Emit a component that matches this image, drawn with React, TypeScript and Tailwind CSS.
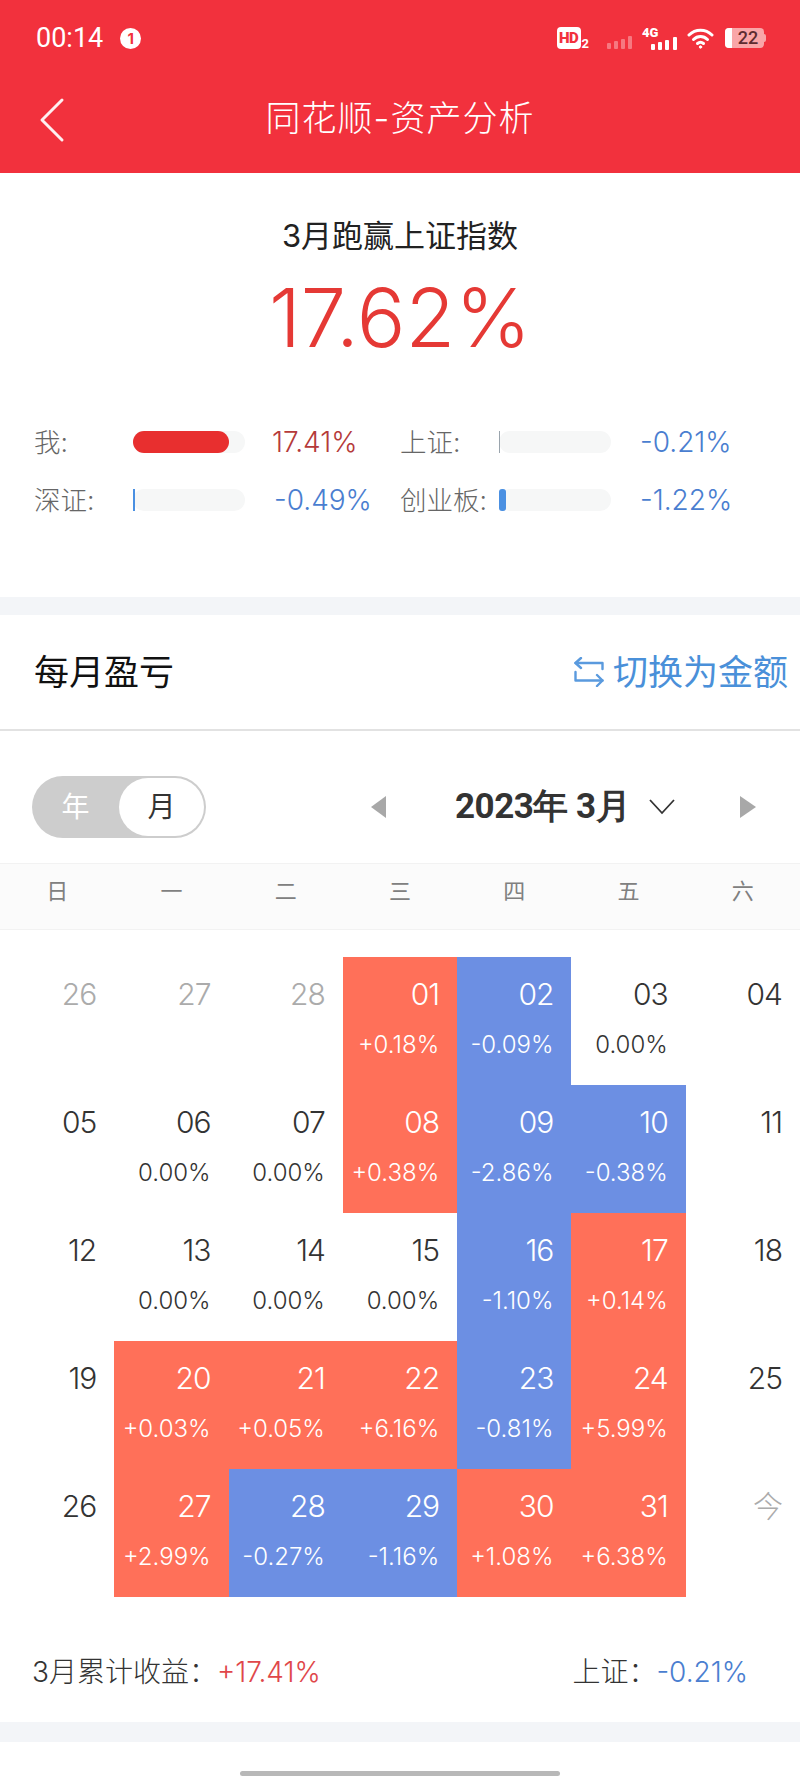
import React from "react";

const FONT = { fontFamily: '"Inter","Noto Sans CJK SC",sans-serif' };

type Cell = { d: string; p?: string; tone?: "r" | "b"; muted?: boolean };

const cells: Cell[] = [
  { d: "26", muted: true }, { d: "27", muted: true }, { d: "28", muted: true },
  { d: "01", p: "+0.18%", tone: "r" }, { d: "02", p: "-0.09%", tone: "b" }, { d: "03", p: "0.00%" }, { d: "04" },
  { d: "05" }, { d: "06", p: "0.00%" }, { d: "07", p: "0.00%" },
  { d: "08", p: "+0.38%", tone: "r" }, { d: "09", p: "-2.86%", tone: "b" }, { d: "10", p: "-0.38%", tone: "b" }, { d: "11" },
  { d: "12" }, { d: "13", p: "0.00%" }, { d: "14", p: "0.00%" }, { d: "15", p: "0.00%" },
  { d: "16", p: "-1.10%", tone: "b" }, { d: "17", p: "+0.14%", tone: "r" }, { d: "18" },
  { d: "19" }, { d: "20", p: "+0.03%", tone: "r" }, { d: "21", p: "+0.05%", tone: "r" }, { d: "22", p: "+6.16%", tone: "r" },
  { d: "23", p: "-0.81%", tone: "b" }, { d: "24", p: "+5.99%", tone: "r" }, { d: "25" },
  { d: "26" }, { d: "27", p: "+2.99%", tone: "r" }, { d: "28", p: "-0.27%", tone: "b" }, { d: "29", p: "-1.16%", tone: "b" },
  { d: "30", p: "+1.08%", tone: "r" }, { d: "31", p: "+6.38%", tone: "r" }, { d: "今", muted: true },
];

function DayCell({ c }: { c: Cell }) {
  const bg = c.tone === "r" ? "bg-[#ff7059]" : c.tone === "b" ? "bg-[#6c8fe3]" : "";
  const num = c.tone ? "text-white" : c.muted ? "text-[#ababab]" : "text-[#333333]";
  const pc = c.tone ? "text-white" : "text-[#333333]";
  return (
    <div className={`flex flex-col items-end pr-[18px] pt-[19px] ${bg}`}>
      <div className={`text-[30px] leading-[36px] font-light tracking-[-1px] ${num}`}>{c.d}</div>
      <div className={`mt-[18px] text-[24px] leading-[30px] font-light ${pc}`}>{c.p}</div>
    </div>
  );
}

function Stat({ label, value, fill, barClass, valueClass, valueMl }: { label: string; value: string; fill: string; barClass: string; valueClass: string; valueMl: string }) {
  return (
    <div className="flex items-center">
      <div className="w-[99px] text-[26.5px] leading-[30px] text-[#666666] font-light">{label}</div>
      <div className="h-[22px] w-[112px] rounded-[11px] bg-[#f6f7f7]">
        <div className={`h-full ${fill} ${barClass}`} />
      </div>
      <div className={`${valueMl} text-[28px] leading-[30px] font-light ${valueClass}`}>{value}</div>
    </div>
  );
}

export default function App() {
  return (
    <div className="flex h-[1778px] w-[800px] flex-col overflow-hidden bg-white" style={FONT}>
      {/* Header */}
      <header className="h-[173px] shrink-0 bg-[#f2313d] text-white">
        <div className="flex h-[76px] items-center pl-[36px] pr-[34px]">
          <span className="font-[Roboto] text-[27px] leading-[32px]">00:14</span>
          <span className="ml-[17px] flex h-[21px] w-[21px] items-center justify-center rounded-full bg-white text-[15px] font-bold leading-none text-[#f2313d]">1</span>
          <div className="ml-auto flex items-center">
            <div className="flex h-[22px] w-[24px] items-center justify-center rounded-[4px] bg-white font-[Roboto] text-[15px] font-black leading-none tracking-[-0.5px] text-[#f2313d]">HD</div>
            <span className="mt-[11px] ml-[1px] font-[Roboto] text-[13px] font-bold leading-none">2</span>
            <svg className="ml-[18px] mt-[8px]" width="27" height="13" viewBox="0 0 27 13">
              <g fill="#ffffff" fillOpacity="0.35">
                <rect x="0" y="7" width="4" height="6" rx="1" />
                <rect x="7" y="5" width="4" height="8" rx="1" />
                <rect x="14" y="3" width="4" height="10" rx="1" />
                <rect x="21" y="0" width="4" height="13" rx="1" />
              </g>
            </svg>
            <div className="relative ml-[8px] h-[24px] w-[36px]">
              <span className="absolute left-0 top-0 font-[Roboto] text-[13px] font-black leading-[13px]">4G</span>
              <svg className="absolute bottom-0 right-0" width="27" height="13" viewBox="0 0 27 13">
                <g fill="#ffffff">
                  <rect x="0" y="7" width="4" height="6" rx="1" />
                  <rect x="7" y="5" width="4" height="8" rx="1" />
                  <rect x="14" y="3" width="4" height="10" rx="1" />
                  <rect x="22" y="0" width="4" height="13" rx="1" />
                </g>
              </svg>
            </div>
            <svg className="ml-[9px]" width="28" height="22" viewBox="0 0 28 22" fill="none" stroke="#ffffff" strokeWidth="3" strokeLinecap="round">
              <path d="M2 8 C 8.5 1.5, 18.5 1.5, 25 8" />
              <path d="M6.5 12.5 C 10.5 8.5, 16.5 8.5, 20.5 12.5" />
              <path d="M10.5 16.5 C 12.5 14.8, 14.5 14.8, 16.5 16.5" />
              <circle cx="13.5" cy="20" r="1.2" fill="#ffffff" strokeWidth="1" />
            </svg>
            <div className="ml-[10px] flex h-[20px] w-[39px] overflow-hidden rounded-[4px] bg-[#f9a6a8]">
              <div className="w-[7px] bg-white" />
              <div className="flex-1 text-center font-[Roboto] text-[18px] font-medium leading-[20px] text-[#5e2c30]">22</div>
            </div>
            <div className="h-[8px] w-[2px] rounded-r-sm bg-[#f9a6a8]" />
          </div>
        </div>
        <div className="relative flex h-[84px] items-center justify-center">
          <svg className="absolute left-[38px] top-[21px]" width="28" height="46" viewBox="0 0 28 46" fill="none" stroke="#ffffff" strokeOpacity="0.92" strokeWidth="3" strokeLinecap="round" strokeLinejoin="round">
            <path d="M24 3 L4 23 L24 43" />
          </svg>
          <span className="text-[35px] leading-[40px] font-light tracking-[1px]">同花顺-资产分析</span>
        </div>
      </header>

      {/* Summary */}
      <section className="flex h-[424px] shrink-0 flex-col">
        <div className="mt-[44px] text-center text-[31px] leading-[38px] text-[#222222]">3月跑赢上证指数</div>
        <div className="mt-[13px] text-center text-[81px] leading-[100px] font-light text-[#e53935]">17.62%</div>
        <div className="mt-[59px] grid grid-cols-[366px_1fr] gap-y-[28px] pl-[34px]">
          <Stat label="我:" value="17.41%" fill="w-[96px] rounded-[11px]" barClass="bg-[#e82f2f]" valueClass="text-[#b53a3a]" valueMl="ml-[27px]" />
          <Stat label="上证:" value="-0.21%" fill="w-[1px]" barClass="bg-[#9aa4ad]" valueClass="text-[#4a7ed0]" valueMl="ml-[29px]" />
          <Stat label="深证:" value="-0.49%" fill="w-[2px]" barClass="bg-[#4a90e2]" valueClass="text-[#4a7ed0]" valueMl="ml-[29px]" />
          <Stat label="创业板:" value="-1.22%" fill="w-[7px] rounded-[3px]" barClass="bg-[#4a90e2]" valueClass="text-[#4a7ed0]" valueMl="ml-[29px]" />
        </div>
      </section>

      <div className="h-[18px] shrink-0 bg-[#f3f5f8]" />

      {/* Title */}
      <div className="flex h-[116px] shrink-0 items-center justify-between border-b-2 border-[#e2e2e2] pl-[34px] pr-[12px]">
        <span className="text-[35px] leading-[40px] text-[#111111]">每月盈亏</span>
        <div className="flex items-center text-[#4a90d9]">
          <svg width="30" height="30" viewBox="0 0 30 30" fill="none" stroke="#5a9ade" strokeWidth="2.4" strokeLinecap="round" strokeLinejoin="round">
            <path d="M7 1 L1.5 6 L7 11" />
            <path d="M1.5 6 H28.5 V12" />
            <path d="M1.5 15 V23.5 H28.5" />
            <path d="M23 18 L28.5 23.5 L23 29" />
          </svg>
          <span className="ml-[9px] text-[35px] leading-[40px]">切换为金额</span>
        </div>
      </div>

      {/* Controls */}
      <div className="flex h-[132px] shrink-0 items-center pl-[32px] pr-[44px] pt-[20px]">
        <div className="flex h-[62px] w-[174px] items-center rounded-full bg-[#cdcdcd]">
          <div className="flex w-[87px] justify-center text-[28px] text-white">年</div>
          <div className="flex h-[58px] w-[85px] items-center justify-center rounded-full bg-white text-[28px] leading-none text-[#333333]">月</div>
        </div>
        <svg className="ml-[165px]" width="16" height="22" viewBox="0 0 16 22"><path d="M15 0 V22 L0 11 Z" fill="#a8a8a8" /></svg>
        <span className="ml-[68px] font-[Roboto] text-[35px] font-bold leading-[42px] tracking-[-0.5px] text-[#333333]">2023年 3月</span>
        <svg className="ml-[18px]" width="28" height="16" viewBox="0 0 28 16" fill="none" stroke="#333333" strokeWidth="1.8"><path d="M2 1 L14 14 L26 1" /></svg>
        <svg className="ml-auto" width="16" height="22" viewBox="0 0 16 22"><path d="M0 0 V22 L16 11 Z" fill="#a8a8a8" /></svg>
      </div>

      {/* Week header */}
      <div className="grid h-[67px] shrink-0 grid-cols-7 items-center border-y border-[#f2f2f2] bg-[#fbfbfb] pb-[10px] text-[22px] text-[#808080]">
        {["日", "一", "二", "三", "四", "五", "六"].map((w) => (
          <div key={w} className="text-center">{w}</div>
        ))}
      </div>

      {/* Calendar */}
      <div className="mt-[27px] grid shrink-0 grid-cols-7 auto-rows-[128px]">
        {cells.map((c, i) => (
          <DayCell key={i} c={c} />
        ))}
      </div>

      {/* Footer */}
      <div className="flex h-[125px] shrink-0 items-center justify-between pl-[32px] pr-[52px] pt-[25px] text-[28px] leading-[32px] font-light text-[#333333]">
        <div>3月累计收益：<span className="text-[#e0474a]">+17.41%</span></div>
        <div>上证：<span className="text-[#4a7ed0]">-0.21%</span></div>
      </div>
      <div className="h-[20px] shrink-0 bg-[#f3f5f8]" />
      <div className="flex flex-1 justify-center pt-[29px]">
        <div className="h-[5px] w-[320px] rounded-full bg-[#b8b8b8]" />
      </div>
    </div>
  );
}
